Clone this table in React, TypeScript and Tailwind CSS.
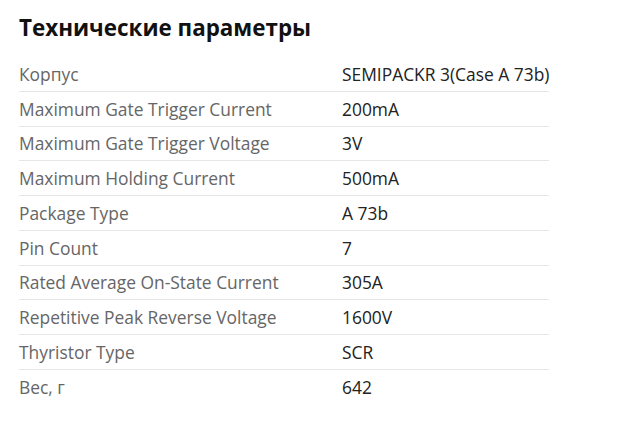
const rows: [string, string][] = [
  ['Корпус', 'SEMIPACKR 3(Case A 73b)'],
  ['Maximum Gate Trigger Current', '200mA'],
  ['Maximum Gate Trigger Voltage', '3V'],
  ['Maximum Holding Current', '500mA'],
  ['Package Type', 'A 73b'],
  ['Pin Count', '7'],
  ['Rated Average On-State Current', '305A'],
  ['Repetitive Peak Reverse Voltage', '1600V'],
  ['Thyristor Type', 'SCR'],
  ['Вес, г', '642'],
];

export default function App() {
  return (
    <div className="min-h-screen bg-white px-[19px] pt-[14px] font-['Open_Sans',sans-serif]">
      <h2 className="text-[22.4px] leading-[27px] font-bold text-[#111]">Технические параметры</h2>
      <div className="mt-[16px] w-[530px]">
        {rows.map(([k, v], i) => (
          <div
            key={k}
            className={`grid grid-cols-[323px_1fr] py-[4.875px] text-[17.4px] leading-[24px] whitespace-nowrap ${
              i < rows.length - 1 ? 'border-b border-[#e6e6e6]' : ''
            }`}
          >
            <span className="text-[#666]">{k}</span>
            <span className="text-[#222]">{v}</span>
          </div>
        ))}
      </div>
    </div>
  );
}
